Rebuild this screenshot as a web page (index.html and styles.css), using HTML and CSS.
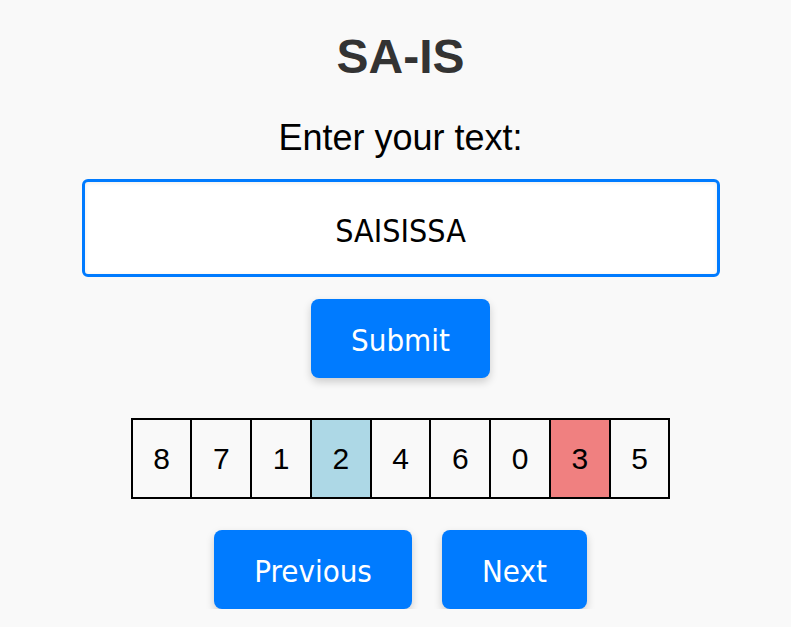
FILE: index.html
```html
<!DOCTYPE html>
<html lang="en">
<head>
<meta charset="utf-8">
<title>SA-IS</title>
<link rel="stylesheet" href="styles.css">
</head>
<body>
<main class="app">
  <h1 class="title">SA-IS</h1>
  <label class="prompt" for="text">Enter your text:</label>
  <input class="text-input" id="text" type="text" value="SAISISSA">
  <button class="btn submit" type="button">Submit</button>
  <div class="array">
    <div class="cell">8</div>
    <div class="cell">7</div>
    <div class="cell">1</div>
    <div class="cell cell-blue">2</div>
    <div class="cell">4</div>
    <div class="cell">6</div>
    <div class="cell">0</div>
    <div class="cell cell-red">3</div>
    <div class="cell">5</div>
  </div>
  <div class="nav">
    <button class="btn" type="button">Previous</button>
    <button class="btn" type="button">Next</button>
  </div>
</main>
</body>
</html>
```

FILE: styles.css
```css
html, body {
  margin: 0;
  padding: 0;
  background: #f9f9f9;
}

body {
  padding-left: 10px;
  font-family: "Liberation Sans", Arial, sans-serif;
}

.app {
  display: flex;
  flex-direction: column;
  align-items: center;
}

.title {
  margin: 29px 0 0;
  font-size: 48px;
  line-height: 56px;
  font-weight: bold;
  color: #333;
}

.prompt {
  display: block;
  margin-top: 32px;
  font-size: 36px;
  line-height: 42px;
  color: #000;
}

.text-input {
  box-sizing: border-box;
  margin-top: 20px;
  width: 638px;
  height: 98px;
  border: 3px solid #007bff;
  border-radius: 6px;
  background: #fff;
  box-shadow: inset 0 1px 4px rgba(0, 0, 0, 0.08);
  font-family: "DejaVu Sans Condensed", "DejaVu Sans", sans-serif;
  font-size: 32px;
  color: #000;
  text-align: center;
  outline: none;
  padding: 5px 10px 0;
}

.btn {
  box-sizing: border-box;
  height: 79px;
  padding: 22px 40px 18px;
  border: none;
  border-radius: 8px;
  background: #007bff;
  color: #fff;
  font-family: "DejaVu Sans Condensed", "DejaVu Sans", sans-serif;
  font-size: 31px;
  line-height: 39px;
  box-shadow: 0 4px 8px rgba(0, 0, 0, 0.18);
  cursor: pointer;
}

.submit {
  margin-top: 22px;
}

.array {
  display: flex;
  justify-content: center;
  margin-top: 40px;
}

.cell {
  box-sizing: border-box;
  width: 61.75px;
  height: 81px;
  border: 2px solid #000;
  display: flex;
  align-items: center;
  justify-content: center;
  font-size: 30px;
  color: #000;
}

.cell + .cell {
  margin-left: -2px;
}

.cell-blue {
  background: #add8e6;
}

.cell-red {
  background: #f08080;
}

.nav {
  display: flex;
  justify-content: center;
  gap: 30px;
  margin-top: 31px;
}
```
